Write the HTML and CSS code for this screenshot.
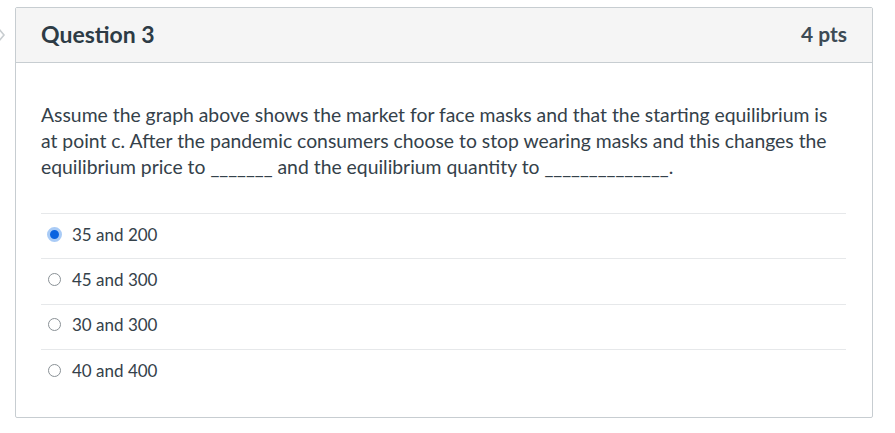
FILE: index.html
```html
<!DOCTYPE html>
<html>
<head>
<meta charset="utf-8">
<link rel="stylesheet" href="styles.css">
</head>
<body>
<div class="page">
  <div class="edge-icon">
    <svg width="8" height="14" viewBox="0 0 8 14"><path d="M0 1 L5 7 L0 13" fill="none" stroke="#c8cdd0" stroke-width="1.6"/></svg>
  </div>
  <div class="card">
    <div class="card-header">
      <span class="title">Question 3</span>
      <span class="pts">4 pts</span>
    </div>
    <div class="card-body">
      <p class="question">Assume the graph above shows the market for face masks and that the starting equilibrium is at point c. After the pandemic consumers choose to stop wearing masks and this changes the equilibrium price to _______ and the equilibrium quantity to ______________.</p>
      <div class="answers">
        <label class="answer"><span class="radio checked"></span><span class="answer-text">35 and 200</span></label>
        <label class="answer"><span class="radio"></span><span class="answer-text">45 and 300</span></label>
        <label class="answer"><span class="radio"></span><span class="answer-text">30 and 300</span></label>
        <label class="answer"><span class="radio"></span><span class="answer-text">40 and 400</span></label>
      </div>
    </div>
  </div>
</div>
</body>
</html>
```
FILE: styles.css
```css
html, body {
  margin: 0;
  padding: 0;
  background: #ffffff;
}
body {
  font-family: Lato, "Open Sans", sans-serif;
  color: #2d3b45;
}
.page {
  position: relative;
  padding: 7px 0 0 15px;
}
.edge-icon {
  position: absolute;
  left: -1px;
  top: 26px;
}
.card {
  width: 856px;
  border: 1px solid #c7cdd1;
  border-radius: 2px;
}
.card-header {
  display: flex;
  justify-content: space-between;
  align-items: center;
  height: 54px;
  padding: 0 25px;
  background: #f5f5f5;
  border-bottom: 1px solid #c7cdd1;
}
.title {
  font-size: 23px;
  font-weight: 700;
  color: #2d3b45;
  margin-top: -3px;
}
.pts {
  font-size: 21px;
  font-weight: 700;
  color: #3d4b55;
  margin-top: -3px;
}
.card-body {
  padding: 39px 26px 23px 25px;
}
.question {
  margin: 0;
  font-size: 19.35px;
  line-height: 26px;
  color: #34414a;
}
.answers {
  margin-top: 33px;
}
.answer {
  display: flex;
  align-items: center;
  height: 45.3px;
  border-top: 1px solid #e6e8ea;
  box-sizing: border-box;
  padding-bottom: 4px;
}
.radio {
  width: 13px;
  height: 13px;
  border: 1px solid #8a9196;
  border-radius: 50%;
  margin-left: 7px;
  margin-right: 11px;
  box-sizing: border-box;
  flex: none;
  background: #fff;
}
.radio.checked {
  border: 3px solid #a9cbf6;
  background: #0a63e0;
  width: 15px;
  height: 15px;
  margin-left: 6px;
  margin-right: 10px;
}
.answer-text {
  font-size: 17px;
  color: #34414a;
}
```
